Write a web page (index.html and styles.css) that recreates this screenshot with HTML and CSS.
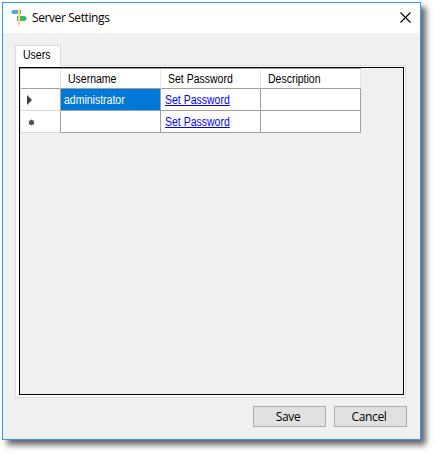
FILE: index.html
```html
<!DOCTYPE html>
<html lang="en">
<head>
<meta charset="utf-8">
<title>Server Settings</title>
<link rel="stylesheet" href="styles.css">
</head>
<body>
<main class="window">
  <header class="titlebar">
    <svg class="app-icon" width="16" height="16" viewBox="0 0 16 16">
      <path d="M0 3 1.500 1H10v4H1.500z" fill="#5aa5ef"/>
      <path d="M6 7h8l2 2.500-2 2.500H6z" fill="#35bd70"/>
      <path d="M7 0h2v16H7z" fill="#f3d978"/>
    </svg>
    <h1 class="title">Server Settings</h1>
    <svg class="close" width="11" height="11" viewBox="0 0 11 11"><path d="M.5.5l10 10M10.500.5l-10 10" stroke="#000" stroke-width="1.150"/></svg>
  </header>
  <div class="tab"><span class="label">Users</span></div>
  <section class="panel">
    <div class="grid">
      <div class="row head"><div class="cell"></div><div class="cell"><span class="label">Username</span></div><div class="cell"><span class="label">Set Password</span></div><div class="cell"><span class="label">Description</span></div></div>
      <div class="row"><div class="cell marker"><svg width="7" height="10" viewBox="0 0 7 10"><path d="M1 0l5 5-5 5z" fill="#404040"/></svg></div><div class="cell selected"><span class="label">administrator</span></div><div class="cell"><a class="label">Set Password</a></div><div class="cell"></div></div>
      <div class="row"><div class="cell marker star"><svg width="7" height="7" viewBox="0 0 7 7"><circle cx="3.500" cy="3.500" r="2.500" fill="#484848"/><path d="M3.500.5v6M.8 1.800l5.400 3.400M6.200 1.800L.8 5.200" stroke="#505050" stroke-width=".8"/></svg></div><div class="cell"></div><div class="cell"><a class="label">Set Password</a></div><div class="cell"></div></div>
    </div>
  </section>
  <footer class="actions"><button>Save</button><button>Cancel</button></footer>
</main>
</body>
</html>
```
FILE: styles.css
```css
* { box-sizing: border-box; }
html, body { height: 454px; }
body { margin: 0; padding: 2px; background: #fff; overflow: hidden; font: 12px/14px "Liberation Sans", sans-serif; color: #000; }
.window { width: 419px; height: 438px; border: 1px solid #3399ff; background: #f0f0f0; box-shadow: 5px 5px 6px rgba(0,0,0,.6); }
.titlebar { height: 30px; background: #fff; display: flex; align-items: center; padding: 0 9px 0 8px; }
.app-icon { margin-top: -2px; }
.title { margin: 0 auto 0 5px; font: 400 12px/16px "Open Sans", sans-serif; letter-spacing: -.4px; }
.close { margin-top: -2px; }
.label { display: inline-block; transform: scaleX(.875); transform-origin: left; }
.tab { position: relative; width: 46px; height: 21px; margin: 12px 0 0 12px; border: 1px solid #dcdcdc; border-bottom: 0; background: #fff; padding: 2px 0 0 7px; }
.panel { width: 391px; height: 333px; margin: -1px 0 0 12px; border: 1px solid #dcdcdc; background: #fff; padding: 1px 1px 2px 3px; }
.grid { width: 385px; height: 328px; border: 1px solid #000; background: #f0f0f0; }
.row { display: grid; grid-template-columns: 41px 100px 100px 100px; width: 341px; height: 22px; }
.cell { background: #fff; border-right: 1px solid #a0a0a0; border-bottom: 1px solid #a0a0a0; padding: 4px 0 0 4px; white-space: nowrap; }
.cell:first-child { border-left: 1px solid #e5e5e5; }
.head { height: 21px; border-top: 1px solid #a0a0a0; }
.head .cell { border-right-color: #e5e5e5; padding: 3px 0 0 7px; }
.row .marker { padding: 6px 0 0 5px; border-bottom-color: #d8d8d8; line-height: 0; }
.row .star { padding: 8px 0 0 7px; }
.row .selected { background: #0078d7; color: #fff; padding-left: 3px; }
a { color: #0000ff; text-decoration: underline; text-underline-offset: 1px; }
.actions { display: flex; justify-content: flex-end; gap: 8px; padding: 8px 13px 0 0; }
button { width: 73px; height: 21px; border: 1px solid #adadad; background: #e1e1e1; padding: 0 3px 0 0; color: #000; font: 12px/15px "Open Sans", sans-serif; letter-spacing: -.35px; }
```
